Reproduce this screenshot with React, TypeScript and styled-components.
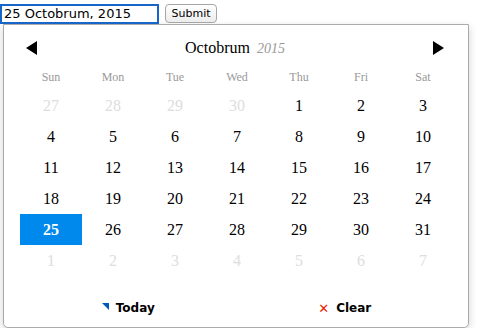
import styled, { createGlobalStyle } from 'styled-components';

const GlobalStyle = createGlobalStyle`
  body {
    margin: 0;
    background: #fff;
    font-family: 'DejaVu Sans', sans-serif;
  }
`;

const WEEKDAYS = ['Sun', 'Mon', 'Tue', 'Wed', 'Thu', 'Fri', 'Sat'];

type Day = { day: number; outside?: boolean; selected?: boolean };

const buildDays = (): Day[] => {
  const days: Day[] = [27, 28, 29, 30].map((d) => ({ day: d, outside: true }));
  for (let d = 1; d <= 31; d++) days.push({ day: d, selected: d === 25 });
  for (let d = 1; d <= 7; d++) days.push({ day: d, outside: true });
  return days;
};

function App() {
  const days = buildDays();

  return (
    <>
      <GlobalStyle />
      <Form>
        <DateInput defaultValue="25 Octobrum, 2015" />
        <SubmitButton type="button">Submit</SubmitButton>
      </Form>
      <Popup>
        <Header>
          <NavArrow $dir="prev" />
          <Title>
            <Month>Octobrum</Month>
            <Year>2015</Year>
          </Title>
          <NavArrow $dir="next" />
        </Header>
        <Weekdays>
          {WEEKDAYS.map((w) => (
            <Weekday key={w}>{w}</Weekday>
          ))}
        </Weekdays>
        <DayGrid>
          {days.map((d, i) => (
            <DayCell key={i} $outside={d.outside} $selected={d.selected}>
              {d.day}
            </DayCell>
          ))}
        </DayGrid>
        <Footer>
          <FooterButton>
            <TodayMark />
            Today
          </FooterButton>
          <FooterButton>
            <ClearMark>✕</ClearMark>
            Clear
          </FooterButton>
        </Footer>
      </Popup>
    </>
  );
}

export default App;

const Form = styled.div`
  display: flex;
  align-items: center;
  gap: 6px;
  padding-top: 3px;
  height: 21px;
`;

const DateInput = styled.input`
  box-sizing: border-box;
  width: 159px;
  height: 20px;
  margin: 0;
  padding: 0 2px;
  border: 2px solid #1865c9;
  outline: none;
  font-family: 'DejaVu Sans', sans-serif;
  font-size: 13px;
  color: #000;
`;

const SubmitButton = styled.button`
  box-sizing: border-box;
  height: 19px;
  width: 52px;
  margin: 0;
  padding: 0;
  border: 1px solid #a6a6a6;
  border-radius: 4px;
  background: linear-gradient(#ffffff, #ececec);
  font-family: 'DejaVu Sans', sans-serif;
  font-size: 11px;
  color: #000;
`;

const Popup = styled.div`
  box-sizing: border-box;
  width: 466px;
  margin-left: 3px;
  border: 1px solid #aaa;
  border-radius: 0 0 5px 5px;
  background: #fff;
  box-shadow: 0 3px 8px rgba(0, 0, 0, 0.18);
  padding: 0 15px 0 16px;
  font-family: 'Liberation Serif', 'Times New Roman', serif;
`;

const Header = styled.div`
  display: flex;
  align-items: center;
  height: 46px;
  padding: 0 9px 0 6px;
`;

const NavArrow = styled.span<{ $dir: 'prev' | 'next' }>`
  width: 0;
  height: 0;
  border-top: 7px solid transparent;
  border-bottom: 7px solid transparent;
  ${({ $dir }) =>
    $dir === 'prev'
      ? 'border-right: 11px solid #000;'
      : 'border-left: 11px solid #000;'}
`;

const Title = styled.div`
  flex: 1;
  text-align: center;
`;

const Month = styled.span`
  font-size: 16px;
  color: #000;
`;

const Year = styled.span`
  font-size: 14px;
  font-style: italic;
  color: #999;
  margin-left: 7px;
`;

const Weekdays = styled.div`
  display: grid;
  grid-template-columns: repeat(7, 62px);
  height: 19px;
`;

const Weekday = styled.div`
  text-align: center;
  font-size: 12px;
  line-height: 12px;
  color: #999;
`;

const DayGrid = styled.div`
  display: grid;
  grid-template-columns: repeat(7, 62px);
  grid-auto-rows: 31px;
`;

const DayCell = styled.div<{ $outside?: boolean; $selected?: boolean }>`
  text-align: center;
  line-height: 31px;
  font-size: 16px;
  color: ${({ $outside, $selected }) =>
    $selected ? '#fff' : $outside ? '#ddd' : '#000'};
  background: ${({ $selected }) => ($selected ? '#0089ec' : 'transparent')};
  font-weight: ${({ $selected }) => ($selected ? 'bold' : 'normal')};
`;

const Footer = styled.div`
  display: grid;
  grid-template-columns: 1fr 1fr;
  height: 51px;
  padding-top: 24px;
  box-sizing: border-box;
`;

const FooterButton = styled.div`
  display: flex;
  align-items: center;
  justify-content: center;
  gap: 7px;
  height: 16px;
  font-family: 'DejaVu Sans', sans-serif;
  font-size: 12px;
  font-weight: bold;
  color: #000;
`;

const TodayMark = styled.span`
  width: 0;
  height: 0;
  border-top: 7px solid #0059bc;
  border-left: 7px solid transparent;
  margin-top: -3px;
`;

const ClearMark = styled.span`
  color: #e20;
  font-weight: normal;
  font-size: 13px;
`;
